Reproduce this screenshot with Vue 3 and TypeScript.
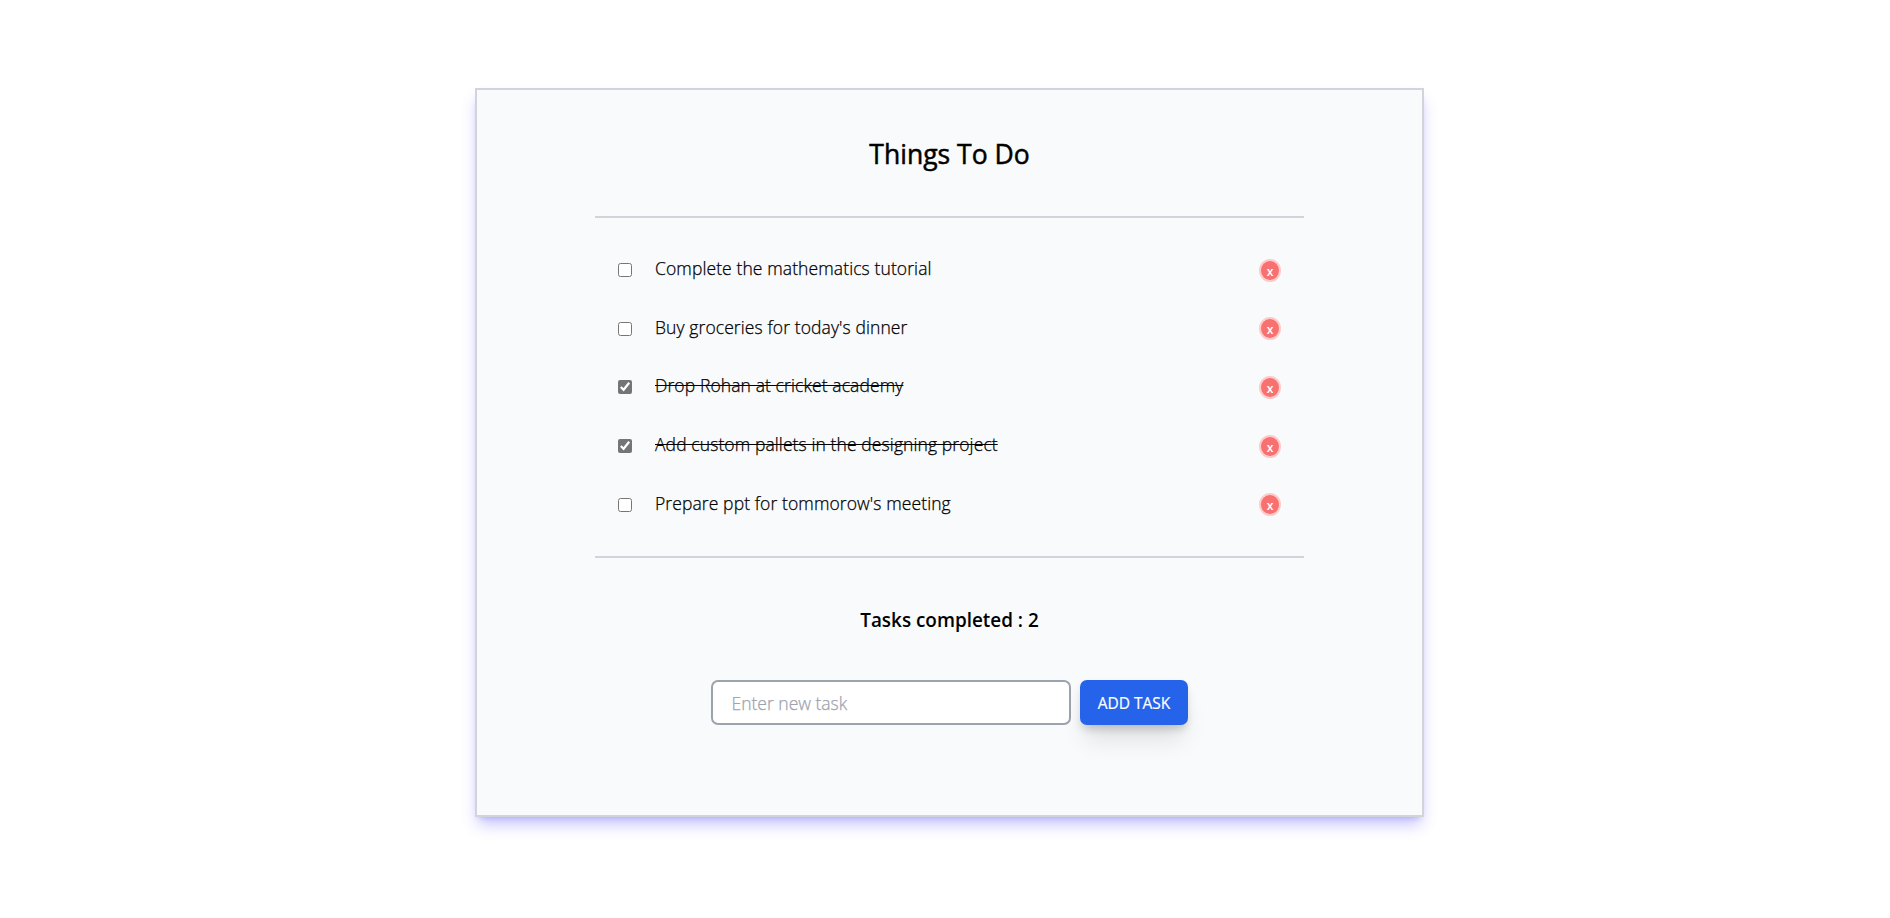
<script setup lang="ts">
import { computed, ref } from 'vue'

interface Task {
  id: number
  title: string
  done: boolean
}

const tasks = ref<Task[]>([
  { id: 1, title: 'Complete the mathematics tutorial', done: false },
  { id: 2, title: "Buy groceries for today's dinner", done: false },
  { id: 3, title: 'Drop Rohan at cricket academy', done: true },
  { id: 4, title: 'Add custom pallets in the designing project', done: true },
  { id: 5, title: "Prepare ppt for tommorow's meeting", done: false },
])
const draft = ref('')
const completed = computed(() => tasks.value.filter((t) => t.done).length)

function addTask() {
  const title = draft.value.trim()
  if (!title) return
  tasks.value.push({ id: Date.now(), title, done: false })
  draft.value = ''
}

function removeTask(id: number) {
  tasks.value = tasks.value.filter((t) => t.id !== id)
}
</script>

<template>
  <div class="page">
    <main class="card">
      <h1 class="title">Things To Do</h1>
      <ul class="list">
        <li v-for="task in tasks" :key="task.id" class="row">
          <input v-model="task.done" class="check" type="checkbox" />
          <span class="label" :class="{ done: task.done }">{{ task.title }}</span>
          <button class="remove" type="button" @click="removeTask(task.id)">x</button>
        </li>
      </ul>
      <p class="summary">Tasks completed : {{ completed }}</p>
      <form class="entry" @submit.prevent="addTask">
        <input v-model="draft" class="field" type="text" placeholder="Enter new task" />
        <button class="add" type="submit">ADD TASK</button>
      </form>
    </main>
  </div>
</template>

<style>
body {
  background: #fff;
}
</style>

<style scoped>
.page {
  box-sizing: border-box;
  height: 918px;
  padding: 88px 0 0 475px;
}
.card {
  box-sizing: border-box;
  width: 949px;
  height: 729px;
  padding: 0 116px;
  display: flex;
  flex-direction: column;
  background: #f9fafc;
  border: 2px solid #d1d5db;
  box-shadow: 0 10px 15px -3px rgba(79, 70, 255, 0.33), 0 4px 6px -4px rgba(79, 70, 255, 0.33);
  font-family: 'Open Sans', 'Noto Sans', sans-serif;
  color: #000;
}
.title {
  height: 36px;
  margin: 46px 0 44px;
  text-align: center;
  font-size: 26.5px;
  line-height: 36px;
  font-weight: 400;
  -webkit-text-stroke: 0.5px #000;
}
.list {
  list-style: none;
  box-sizing: border-box;
  height: 342px;
  margin: 0 2px;
  padding: 23px 23px 0 23px;
  border-top: 2px solid #d1d5db;
  border-bottom: 2px solid #d1d5db;
}
.row {
  display: flex;
  align-items: center;
  height: 58.6px;
}
.check {
  width: 14px;
  height: 14px;
  margin: 0 23px 0 0;
  accent-color: #757575;
}
.label {
  font-size: 17.5px;
  line-height: 28px;
  font-weight: 300;
  letter-spacing: 0.1px;
  margin-top: -4px;
  -webkit-text-stroke: 0.25px #000;
}
.done {
  text-decoration: line-through;
}
.remove {
  box-sizing: border-box;
  width: 22px;
  height: 23px;
  margin-left: auto;
  padding: 2px 0 0;
  border: 2px solid #fecaca;
  border-radius: 50%;
  background: #f87171;
  color: #fff;
  font: 600 12px/15px 'Open Sans', 'Noto Sans', sans-serif;
}
.summary {
  margin: 48px 0 0;
  height: 28px;
  text-align: center;
  font-size: 18.9px;
  line-height: 28px;
  font-weight: 600;
}
.entry {
  display: flex;
  gap: 9px;
  margin: 46px 0 0 118px;
}
.field {
  box-sizing: border-box;
  width: 360px;
  height: 45px;
  padding: 0 18.5px;
  border: 2px solid #9ca3af;
  border-radius: 7px;
  background: #fff;
  font: 300 17.5px 'Open Sans', 'Noto Sans', sans-serif;
}
.field::placeholder {
  color: #9ca3af;
  -webkit-text-stroke: 0.25px #9ca3af;
}
.add {
  width: 108px;
  height: 45px;
  padding: 0;
  border: 0;
  border-radius: 7px;
  background: #2563eb;
  color: #fff;
  font: 400 15.5px 'Open Sans', 'Noto Sans', sans-serif;
  -webkit-text-stroke: 0.2px #fff;
  box-shadow: 0 20px 25px -5px rgba(0, 0, 0, 0.1), 0 8px 10px -6px rgba(0, 0, 0, 0.1), 0 5px 8px rgba(0, 0, 0, 0.1);
}
</style>
